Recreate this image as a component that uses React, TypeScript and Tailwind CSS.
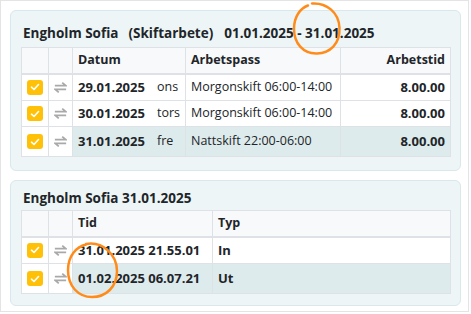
import type { ReactNode } from "react";

const font = { fontFamily: '"Open Sans", "Noto Sans", sans-serif' };

const Check = () => (
    <span className="flex h-[15px] w-[18px] items-center justify-center rounded-[3px] bg-[#ffc107]">
        <svg width="10" height="8" viewBox="0 0 10 8" fill="none">
            <path d="M1.5 4.2 L4 6.5 L8.5 1.5" stroke="white" strokeWidth="1.6" strokeLinecap="round" strokeLinejoin="round" />
        </svg>
    </span>
);

const Swap = () => (
    <svg width="15" height="13" viewBox="0 0 15 13" className="text-[#a9a9a9]">
        <path d="M1 4.3 H13.5 L9.5 0.8" stroke="currentColor" strokeWidth="2" fill="none" strokeLinejoin="miter" />
        <path d="M14 8.7 H1.5 L5.5 12.2" stroke="currentColor" strokeWidth="2" fill="none" strokeLinejoin="miter" />
    </svg>
);

type RowProps = {
    height: string;
    children: ReactNode;
};

const cell = "border border-[#dee2e6] px-[5px] py-0 whitespace-nowrap";

const Row = ({ height, children }: RowProps) => (
    <tr className={height}>
        <td className={`${cell} bg-white`}>
            <div className="flex justify-center"><Check /></div>
        </td>
        <td className={`${cell} bg-white`}>
            <div className="flex justify-center"><Swap /></div>
        </td>
        {children}
    </tr>
);

const tint = (selected?: boolean) => (selected ? "bg-[#deebec]" : "bg-white");

const shifts = [
    { date: "29.01.2025", day: "ons", pass: "Morgonskift 06:00-14:00", time: "8.00.00", h: "h-[27px]" },
    { date: "30.01.2025", day: "tors", pass: "Morgonskift 06:00-14:00", time: "8.00.00", h: "h-[26px]" },
    { date: "31.01.2025", day: "fre", pass: "Nattskift 22:00-06:00", time: "8.00.00", h: "h-[30px]", selected: true },
];

const stamps = [
    { tid: "31.01.2025 21.55.01", typ: "In", h: "h-[27px]" },
    { tid: "01.02.2025 06.07.21", typ: "Ut", h: "h-[30px]", selected: true },
];

export default function App() {
    return (
        <div className="relative h-[312px] w-[469px] border border-[#e4e4e4] bg-white pl-[9px] pt-[9px] text-[12.5px] text-[#212529]" style={font}>
            <div className="w-[451px] rounded-md border border-[#d9e8ec] bg-[#edf5f7] px-[10px] pb-[13px] pt-[12px]">
                <h2 className="mb-[4px] flex h-[20px] items-center pl-[2px] text-[13.5px] font-bold leading-[20px]">
                    <span>Engholm Sofia</span>
                    <span className="ml-[10px]">(Skiftarbete)</span>
                    <span className="ml-[11px]">01.01.2025 - 31.01.2025</span>
                </h2>
                <table className="w-[430px] table-fixed border-collapse">
                    <colgroup>
                        <col className="w-[27px]" />
                        <col className="w-[24px]" />
                        <col className="w-[113px]" />
                        <col className="w-[155px]" />
                        <col />
                    </colgroup>
                    <thead>
                        <tr className="h-[26px] bg-[#f8f9fa] font-bold">
                            <th className={`${cell} border-b-2`}></th>
                            <th className={`${cell} border-b-2`}></th>
                            <th className={`${cell} border-b-2 text-left`}>Datum</th>
                            <th className={`${cell} border-b-2 text-left`}>Arbetspass</th>
                            <th className={`${cell} border-b-2 text-right`}>Arbetstid</th>
                        </tr>
                    </thead>
                    <tbody>
                        {shifts.map((s) => (
                            <Row key={s.date} height={s.h}>
                                <td className={`${cell} ${tint(s.selected)}`}>
                                    <div className="flex items-center">
                                        <span className="w-[79px] text-[13px] font-bold">{s.date}</span>
                                        <span>{s.day}</span>
                                    </div>
                                </td>
                                <td className={`${cell} ${tint(s.selected)}`}>{s.pass}</td>
                                <td className={`${cell} ${tint(s.selected)} text-right text-[13px] font-bold`}>{s.time}</td>
                            </Row>
                        ))}
                    </tbody>
                </table>
            </div>

            <div className="mt-[9px] w-[451px] rounded-md border border-[#d9e8ec] bg-[#edf5f7] px-[10px] pb-[11px] pt-[7px]">
                <h2 className="mb-[2px] h-[20px] pl-[2px] text-[13.5px] font-bold leading-[20px]">Engholm Sofia 31.01.2025</h2>
                <table className="w-[430px] table-fixed border-collapse">
                    <colgroup>
                        <col className="w-[27px]" />
                        <col className="w-[24px]" />
                        <col className="w-[140px]" />
                        <col />
                    </colgroup>
                    <thead>
                        <tr className="h-[26px] bg-[#f8f9fa] font-bold">
                            <th className={`${cell} border-b-2`}></th>
                            <th className={`${cell} border-b-2`}></th>
                            <th className={`${cell} border-b-2 text-left`}>Tid</th>
                            <th className={`${cell} border-b-2 text-left`}>Typ</th>
                        </tr>
                    </thead>
                    <tbody>
                        {stamps.map((s) => (
                            <Row key={s.tid} height={s.h}>
                                <td className={`${cell} ${tint(s.selected)} text-[13px] font-bold`}>{s.tid}</td>
                                <td className={`${cell} ${tint(s.selected)} text-[13px] font-bold`}>{s.typ}</td>
                            </Row>
                        ))}
                    </tbody>
                </table>
            </div>

            {/* annotation rings */}
            <svg className="pointer-events-none absolute left-[-1px] top-[-1px]" width="471" height="314" viewBox="0 0 471 314" fill="none">
                <path d="M312 3.5 C326 2.5 339 12 339.5 28 C340 44 330 53 317 53.5 C303 54 294 43 294 29 C294 16 301 8 308 5.5" stroke="#ff8c1a" strokeWidth="2.5" strokeLinecap="round" />
                <path d="M86 244 C103 241 117 255 117 271 C117 287 106 297 92 297 C78 297 68 286 68 270 C68 256 76 247 86 244.5" stroke="#ff8c1a" strokeWidth="2.5" strokeLinecap="round" />
            </svg>
        </div>
    );
}
